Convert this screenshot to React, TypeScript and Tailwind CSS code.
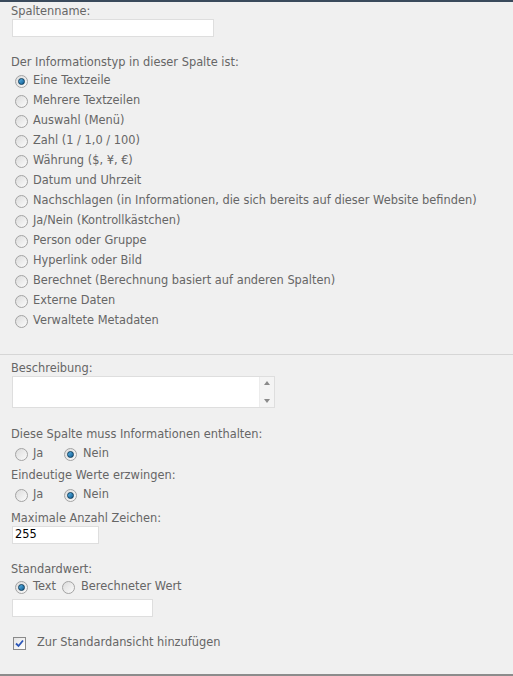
import React from "react";

const types = [
  "Eine Textzeile",
  "Mehrere Textzeilen",
  "Auswahl (Menü)",
  "Zahl (1 / 1,0 / 100)",
  "Währung ($, ¥, €)",
  "Datum und Uhrzeit",
  "Nachschlagen (in Informationen, die sich bereits auf dieser Website befinden)",
  "Ja/Nein (Kontrollkästchen)",
  "Person oder Gruppe",
  "Hyperlink oder Bild",
  "Berechnet (Berechnung basiert auf anderen Spalten)",
  "Externe Daten",
  "Verwaltete Metadaten",
];

const Radio = ({ checked }: { checked?: boolean }) => (
  <span className="relative inline-flex h-[13px] w-[13px] shrink-0 items-center justify-center rounded-full border border-[#a3a3a3] bg-gradient-to-br from-[#dcdcdc] to-[#fbfbfb]">
    {checked && (
      <span className="h-[7px] w-[7px] rounded-full border border-[#0e3d5c] bg-gradient-to-br from-[#5ab6ea] to-[#0f5d92]" />
    )}
  </span>
);

const Label = ({ children, className = "" }: { children: React.ReactNode; className?: string }) => (
  <div className={`h-[16px] leading-[16px] ${className}`}>{children}</div>
);

export default function App() {
  return (
    <div
      className="h-[676px] w-[513px] overflow-hidden border-t-2 border-b-2 border-t-[#3a4a5c] border-b-[#8c8c8c] bg-[#f0f0f0] text-[11.4px] text-[#666666]"
      style={{ fontFamily: '"DejaVu Sans", Verdana, sans-serif' }}
    >
      <div className="pl-[11px]">
        {/* Spaltenname */}
        <Label className="mt-[1px]">Spaltenname:</Label>
        <div className="ml-[1px] h-[18px] w-[202px] border border-[#dedede] bg-white" />

        {/* Informationstyp */}
        <Label className="mt-[17px]">Der Informationstyp in dieser Spalte ist:</Label>
        <div className="mt-[1px] flex flex-col">
          {types.map((t, i) => (
            <div key={t} className="flex h-[20px] items-center gap-[5px] pl-[4px]">
              <Radio checked={i === 0} />
              <span className="whitespace-nowrap">{t}</span>
            </div>
          ))}
        </div>
      </div>

      <div className="mt-[23px] h-px w-full bg-[#d6d6d6]" />

      <div className="pl-[11px]">
        {/* Beschreibung */}
        <Label className="mt-[5px]">Beschreibung:</Label>
        <div className="ml-[1px] flex h-[32px] w-[263px] border border-[#dedede] bg-white">
          <div className="flex-1" />
          <div className="flex w-[15px] flex-col items-center justify-between border-l border-[#ececec] bg-[#f4f4f4] py-[4px]">
            <span className="h-0 w-0 border-x-[3.5px] border-b-[4px] border-x-transparent border-b-[#8a8a8a]" />
            <span className="h-0 w-0 border-x-[3.5px] border-t-[4px] border-x-transparent border-t-[#8a8a8a]" />
          </div>
        </div>

        {/* Pflichtfeld */}
        <Label className="mt-[18px]">Diese Spalte muss Informationen enthalten:</Label>
        <div className="mt-[2px] flex h-[20px] items-center pl-[4px]">
          <Radio />
          <span className="ml-[5px] w-[31px]">Ja</span>
          <Radio checked />
          <span className="ml-[6px]">Nein</span>
        </div>

        {/* Eindeutig */}
        <Label className="mt-[3px]">Eindeutige Werte erzwingen:</Label>
        <div className="mt-[2px] flex h-[20px] items-center pl-[4px]">
          <Radio />
          <span className="ml-[5px] w-[31px]">Ja</span>
          <Radio checked />
          <span className="ml-[6px]">Nein</span>
        </div>

        {/* Max Zeichen */}
        <Label className="mt-[5px]">Maximale Anzahl Zeichen:</Label>
        <div className="ml-[1px] flex h-[18px] w-[87px] items-center border border-[#dedede] bg-white pl-[2px] text-black">
          255
        </div>

        {/* Standardwert */}
        <Label className="mt-[17px]">Standardwert:</Label>
        <div className="flex h-[20px] items-center pl-[4px]">
          <Radio checked />
          <span className="ml-[5px] mr-[6px]">Text</span>
          <Radio />
          <span className="ml-[6px]">Berechneter Wert</span>
        </div>
        <div className="ml-[1px] mt-[2px] h-[18px] w-[141px] border border-[#dedede] bg-white" />

        {/* Checkbox */}
        <div className="mt-[17px] flex h-[18px] items-center pl-[2px]">
          <span className="flex h-[13px] w-[13px] items-center justify-center border border-[#8a8a8a] bg-gradient-to-br from-[#e4e4e4] to-white">
            <svg width="9" height="9" viewBox="0 0 9 9">
              <path d="M1 4.5 L3.5 7 L8 1.5" fill="none" stroke="#2a55b8" strokeWidth="1.8" />
            </svg>
          </span>
          <span className="ml-[11px]">Zur Standardansicht hinzufügen</span>
        </div>
      </div>
    </div>
  );
}
